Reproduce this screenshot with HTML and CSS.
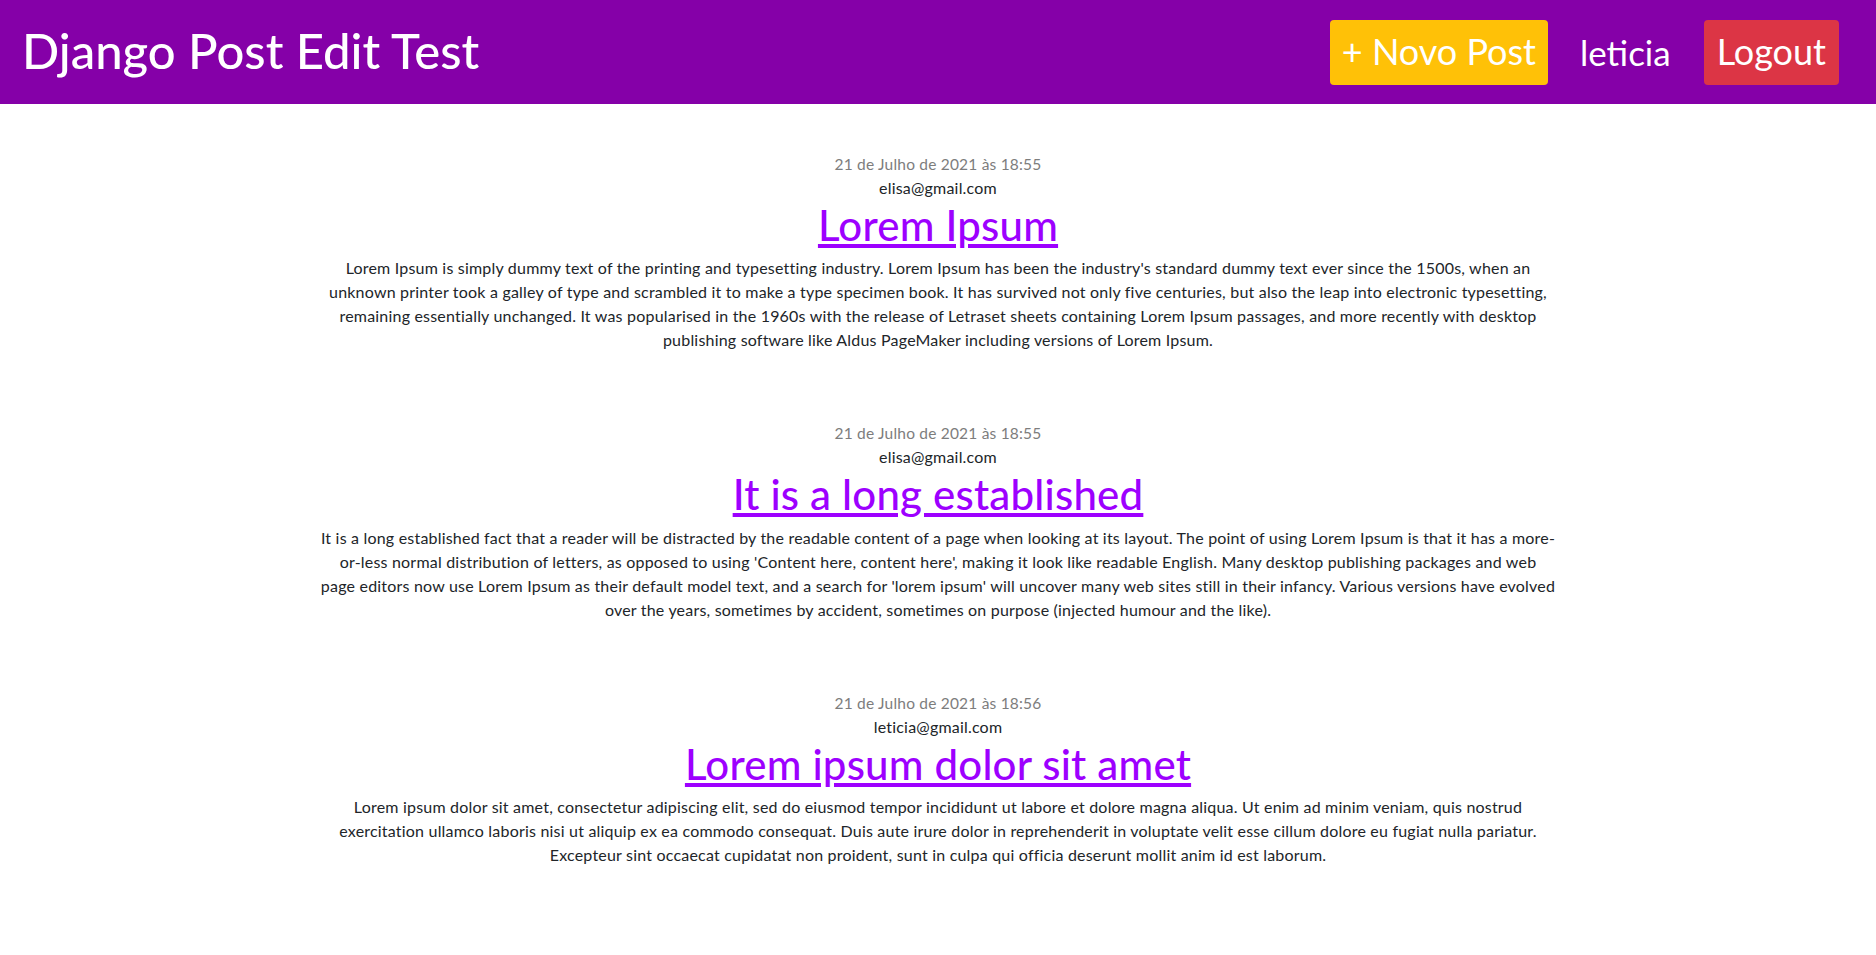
FILE: index.html
```html
<!DOCTYPE html>
<html lang="pt-br">
<head>
<meta charset="utf-8">
<title>Django Post Edit Test</title>
<link rel="stylesheet" href="styles.css">
</head>
<body>
<header class="topbar">
  <h1 class="brand">Django Post Edit Test</h1>
  <nav class="nav">
    <a class="btn btn-warning" href="#">+ Novo Post</a>
    <span class="user">leticia</span>
    <a class="btn btn-danger" href="#">Logout</a>
  </nav>
</header>
<main class="posts">
  <article class="post">
    <div class="date">21 de Julho de 2021 às 18:55</div>
    <div class="author">elisa@gmail.com</div>
    <h2 class="title"><a href="#">Lorem Ipsum</a></h2>
    <p class="text">Lorem Ipsum is simply dummy text of the printing and typesetting industry. Lorem Ipsum has been the industry's standard dummy text ever since the 1500s, when an unknown printer took a galley of type and scrambled it to make a type specimen book. It has survived not only five centuries, but also the leap into electronic typesetting, remaining essentially unchanged. It was popularised in the 1960s with the release of Letraset sheets containing Lorem Ipsum passages, and more recently with desktop publishing software like Aldus PageMaker including versions of Lorem Ipsum.</p>
  </article>
  <article class="post">
    <div class="date">21 de Julho de 2021 às 18:55</div>
    <div class="author">elisa@gmail.com</div>
    <h2 class="title"><a href="#">It is a long established</a></h2>
    <p class="text">It is a long established fact that a reader will be distracted by the readable content of a page when looking at its layout. The point of using Lorem Ipsum is that it has a more-or-less normal distribution of letters, as opposed to using 'Content here, content here', making it look like readable English. Many desktop publishing packages and web<br>page editors now use Lorem Ipsum as their default model text, and a search for 'lorem ipsum' will uncover many web sites still in their infancy. Various versions have evolved over the years, sometimes by accident, sometimes on purpose (injected humour and the like).</p>
  </article>
  <article class="post">
    <div class="date">21 de Julho de 2021 às 18:56</div>
    <div class="author">leticia@gmail.com</div>
    <h2 class="title"><a href="#">Lorem ipsum dolor sit amet</a></h2>
    <p class="text">Lorem ipsum dolor sit amet, consectetur adipiscing elit, sed do eiusmod tempor incididunt ut labore et dolore magna aliqua. Ut enim ad minim veniam, quis nostrud exercitation ullamco laboris nisi ut aliquip ex ea commodo consequat. Duis aute irure dolor in reprehenderit in voluptate velit esse cillum dolore eu fugiat nulla pariatur. Excepteur sint occaecat cupidatat non proident, sunt in culpa qui officia deserunt mollit anim id est laborum.</p>
  </article>
</main>
</body>
</html>
```

FILE: styles.css
```css
* { box-sizing: border-box; }
html, body { margin: 0; padding: 0; }
body {
  font-family: Lato, "Open Sans", sans-serif;
  color: #212529;
  background: #fff;
  font-size: 16px;
  line-height: 1.5;
}
.topbar {
  background: #8500a8;
  height: 104px;
  display: flex;
  align-items: center;
  justify-content: space-between;
  padding: 0 37px 0 22px;
}
.brand {
  margin: 0;
  color: #fff;
  font-size: 49px;
  font-weight: 500;
  line-height: 1.2;
  padding-bottom: 4px;
}
.nav {
  display: flex;
  align-items: center;
}
.btn {
  display: inline-block;
  color: #fff;
  text-decoration: none;
  font-size: 36px;
  line-height: 1.2;
  padding: 10px 13px;
  border-radius: 4px;
  height: 65px;
}
.btn-warning { background: #ffc107; padding: 10px 12px; }
.btn-danger { background: #dc3545; }
.user {
  color: #fff;
  font-size: 35px;
  line-height: 1.2;
  margin: 0 33px 0 32px;
}
.posts {
  width: 1246px;
  margin: 0 auto;
  padding-top: 48px;
  text-align: center;
  letter-spacing: 0.2px;
}
.post {
  margin-bottom: 69px;
}
.date {
  color: #7d7d7d;
  font-size: 15.5px;
  line-height: 24px;
}
.author {
  font-size: 16px;
  line-height: 24px;
}
.title {
  margin: 0;
  font-size: 42px;
  font-weight: 500;
  line-height: 1.2;
  letter-spacing: 0.2px;
}
.title a { color: #9d00ff; }
.text {
  margin: 6px 0 0;
  font-size: 16px;
  line-height: 24px;
}
```
